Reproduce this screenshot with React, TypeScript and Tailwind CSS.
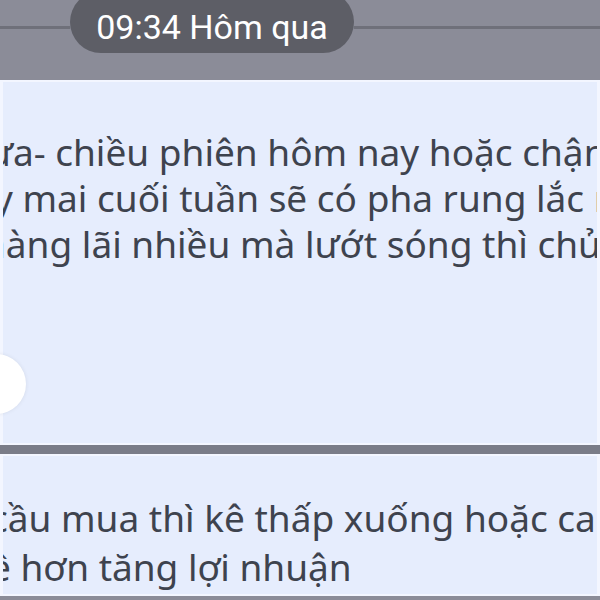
import React from "react";

const textFont = { fontFamily: '"Noto Sans", "Open Sans", sans-serif' };

export default function App() {
  return (
    <div className="w-[600px] h-[600px] overflow-hidden bg-[#8b8c98] flex flex-col relative">
      {/* header with date pill */}
      <div className="h-[80px] shrink-0 flex flex-col">
        <div className="h-[62px] -mt-[9px] flex items-start">
          <div className="w-[70px] h-[3px] mt-[35px] bg-[#6f707a]" />
          <div
            className="h-[62px] w-[284px] rounded-full bg-[#5d5e66] flex items-center justify-center text-white text-[34px] pt-[10px]"
            style={{ fontFamily: 'Roboto, "Liberation Sans", sans-serif' }}
          >
            09:34 Hôm qua
          </div>
          <div className="flex-1 h-[3px] mt-[35px] bg-[#6f707a]" />
        </div>
      </div>

      {/* bubble 1 */}
      <div className="h-[365px] shrink-0 bg-[#e6edfd] border-t-2 border-b-2 border-l-[3px] border-r-[3px] border-[#f3f6ff] overflow-hidden pt-[47px] text-[#3e434e] text-[37px] leading-[46px]" style={textFont}>
        <div className="whitespace-nowrap -ml-[15px]">ưa- chiều phiên hôm nay hoặc chận</div>
        <div className="whitespace-nowrap -ml-[9px]">y mai cuối tuần sẽ có pha rung lắc m</div>
        <div className="whitespace-nowrap -ml-[20px]">hàng lãi nhiều mà lướt sóng thì chủ</div>
      </div>

      {/* separator */}
      <div className="h-[9px] shrink-0 bg-[#7a7c88]" />

      {/* bubble 2 */}
      <div className="h-[142px] shrink-0 bg-[#e6edfd] border-t-2 border-b-2 border-l-[3px] border-r-[3px] border-[#f3f6ff] overflow-hidden pt-[37px] text-[#3e434e] text-[37px] leading-[49px]" style={textFont}>
        <div className="whitespace-nowrap -ml-[13px]">cầu mua thì kê thấp xuống hoặc cao</div>
        <div className="whitespace-nowrap -ml-[13px]">ề hơn tăng lợi nhuận</div>
      </div>

      {/* reaction circle */}
      <div className="absolute left-[-34px] top-[354px] w-[60px] h-[60px] rounded-full bg-white shadow-[0_0_4px_rgba(0,0,0,0.08)]" />
    </div>
  );
}
